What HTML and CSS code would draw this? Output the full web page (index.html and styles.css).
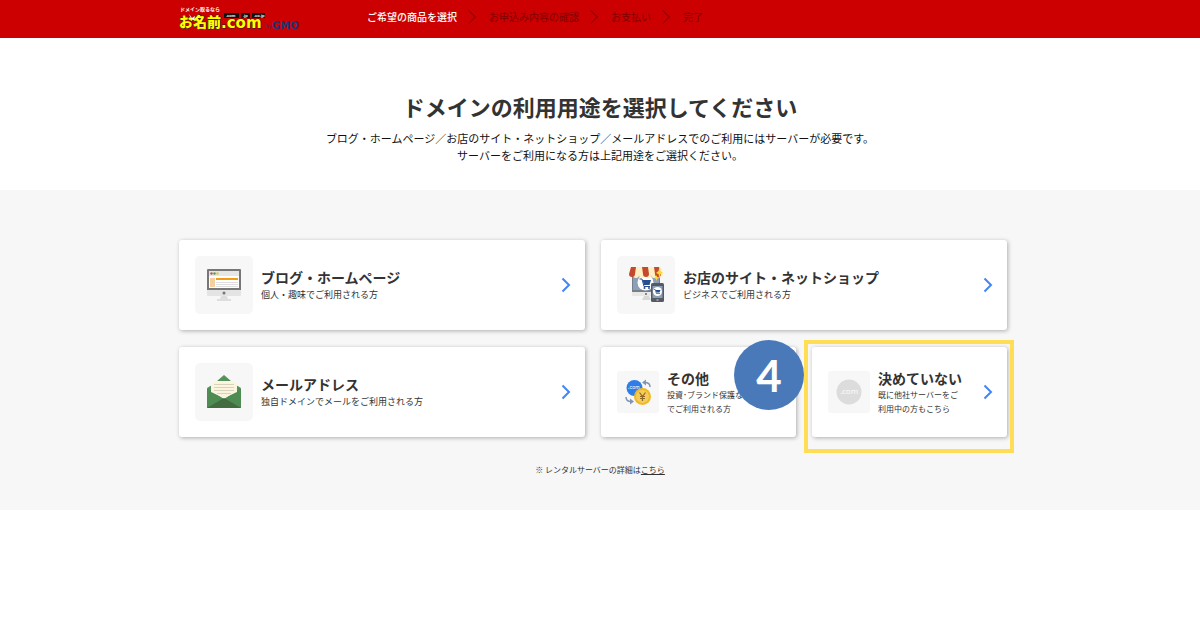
FILE: index.html
```html
<!DOCTYPE html>
<html lang="ja">
<head>
<meta charset="utf-8">
<title>ドメインの利用用途を選択</title>
<link rel="stylesheet" href="styles.css">
</head>
<body>
<header class="header">
  <div class="header-inner">
    <a class="logo" href="#">
      <svg width="122" height="30" viewBox="0 0 122 30" role="img" aria-label="ドメイン取るなら お名前.com by GMO">
        <text class="logo-tag" x="1" y="9">ドメイン取るなら</text>
        <text class="logo-name" x="0" y="25">お名前</text>
        <path d="M10 12l3 4 3-2-1 4-3-1z" fill="#fff"/>
        <text class="logo-com" x="42" y="26">.com</text>
        <path d="M45 11h15v5H45zM62 11h9v5h-9zM73 11h13v5H73z" fill="#111"/>
        <text class="logo-tld" x="47" y="15">.com</text>
        <text class="logo-tld" x="64" y="15">.jp</text>
        <text class="logo-tld" x="75" y="15">.co.jp</text>
        <text class="logo-by" x="87" y="26">by</text>
        <text class="logo-gmo" x="93" y="27">GMO</text>
      </svg>
    </a>
    <ol class="steps">
      <li class="step current">ご希望の商品を選択</li>
      <li class="step">お申込み内容の確認</li>
      <li class="step">お支払い</li>
      <li class="step">完了</li>
    </ol>
  </div>
</header>
<main>
  <section class="intro">
    <h1>ドメインの利用用途を選択してください</h1>
    <p>ブログ・ホームページ／お店のサイト・ネットショップ／メールアドレスでのご利用にはサーバーが必要です。<br>サーバーをご利用になる方は上記用途をご選択ください。</p>
  </section>
  <section class="choices">
    <div class="container">
      <div class="grid">
        <a class="card wide" href="#">
          <span class="icon">
            <svg width="36" height="34" viewBox="0 0 36 34">
              <rect x="1" y="1" width="34" height="27" rx="1" fill="#e4e4e4"/>
              <path d="M1 2a1 1 0 0 1 1-1h32a1 1 0 0 1 1 1v20H1z" fill="#777"/>
              <path d="M3 3h30v17H3z" fill="#fff"/><path d="M3 3h30v5H3z" fill="#e6e6e6"/>
              <circle cx="5.500" cy="5.500" r="1.200" fill="#d0474f"/><circle cx="8.500" cy="5.500" r="1.200" fill="#4d9a58"/><circle cx="11.500" cy="5.500" r="1.200" fill="#f1c31f"/>
              <path d="M4 10h5v9H4z" fill="#f6cfa0"/><path d="M10 10h22v2H10z" fill="#f79a14"/>
              <path d="M10 14h22v1H10zM10 16h22v1H10zM10 18h22v1H10z" fill="#dedede"/>
              <circle cx="18" cy="25" r="1.500" fill="#777"/>
              <path d="M15 28h6l1 3h3v2H11v-2h3z" fill="#dedede"/>
            </svg>
          </span>
          <span class="text"><span class="name">ブログ・ホームページ</span><span class="desc">個人・趣味でご利用される方</span></span>
          <svg class="arrow" width="10" height="16" viewBox="0 0 10 16"><path d="M1.500 1.500L8 8l-6.500 6.500"/></svg>
        </a>
        <a class="card wide" href="#">
          <span class="icon">
            <svg width="38" height="38" viewBox="0 0 38 38">
              <path d="M5 8h28v18H5z" fill="#777f8a"/><path d="M6 8h26v16H6z" fill="#8e9fb8"/>
              <path d="M5 26h28v4H5z" fill="#e8e8e8"/><path d="M17 30h5l2 4h-9z" fill="#d8d8d8"/><circle cx="19" cy="28" r="1" fill="#666"/>
              <circle cx="18.500" cy="16.500" r="8" fill="#fff"/>
              <path d="M12.500 13h2.500l2 7.500h6" fill="none" stroke="#284f8d"/><path d="M15.500 14h8.500l-1.500 5h-5.500z" fill="#284f8d"/>
              <circle cx="17.500" cy="22" r="1" fill="#284f8d"/><circle cx="22" cy="22" r="1" fill="#284f8d"/>
              <path d="M4 1h30l2 7a3 3 0 0 1-6 1 3 3 0 0 1-6 0 3 3 0 0 1-6 0 3 3 0 0 1-6 0 3 3 0 0 1-6 0 3 3 0 0 1-4-1z" fill="#fff0c4"/>
              <path d="M4 1h5L8 8a3 3 0 0 1-6 0zM15 1h6l1 7a3 3 0 0 1-6 0zM27 1h5l2 7a3 3 0 0 1-6 0z" fill="#c44a2d"/>
              <path d="M32.500 1l1 4 2.500 2-2.500 1-1 4-1-4-2.500-1 2.500-2zM29.500 9l.6 2 1.600 1-1.600 1-.6 2-.6-2-1.600-1 1.600-1z" fill="#ffd92e"/>
              <rect x="24" y="17" width="13" height="19" rx="1.500" fill="#555b64"/><path d="M25.500 20h10v12h-10z" fill="#8e9fb8"/>
              <circle cx="30.500" cy="25.500" r="4.500" fill="#fff"/><path d="M27 23.500h1.200l1.200 4h3.600" fill="none" stroke="#284f8d" stroke-width=".7"/><path d="M28.500 24h5l-1 2.500h-3z" fill="#284f8d"/>
              <path d="M29.500 33h2v2h-2z" fill="#999"/>
            </svg>
          </span>
          <span class="text"><span class="name">お店のサイト・ネットショップ</span><span class="desc">ビジネスでご利用される方</span></span>
          <svg class="arrow" width="10" height="16" viewBox="0 0 10 16"><path d="M1.500 1.500L8 8l-6.500 6.500"/></svg>
        </a>
        <a class="card wide" href="#">
          <span class="icon">
            <svg width="36" height="36" viewBox="0 0 36 36">
              <path d="M18 1l7 6H11zM1 14l5-3v10zM35 14l-5-3v10z" fill="#55935a"/>
              <path d="M1 14l17 11 17-11v20H1z" fill="#4e8c53"/>
              <path d="M7 8h22l2 2v8L18 24 5 18v-8z" fill="#fbf5df"/>
              <path d="M8 10h20v1H8zM8 13h20v1H8zM8 16h20v1H8zM11 19h14v1H11z" fill="#d9d3bb"/>
              <path d="M1 34l17-10 17 10z" fill="#426b3f"/>
            </svg>
          </span>
          <span class="text"><span class="name">メールアドレス</span><span class="desc">独自ドメインでメールをご利用される方</span></span>
          <svg class="arrow" width="10" height="16" viewBox="0 0 10 16"><path d="M1.500 1.500L8 8l-6.500 6.500"/></svg>
        </a>
        <a class="card narrow" href="#">
          <span class="icon">
            <svg width="28" height="28" viewBox="0 0 28 28">
              <circle cx="10.500" cy="10" r="8" fill="#2f7de6"/>
              <text class="icon-com" x="4" y="11">.com</text>
              <path d="M26 9c0-3-2-4.500-5-4.500M2 19c0 3 2 4.500 5 4.500" fill="none" stroke="#8495b3" stroke-width="1.500"/>
              <path d="M18 4.500l4-3v6zM10 23.500l-4-3v6z" fill="#8495b3"/>
              <circle cx="18.500" cy="18.500" r="8.500" fill="#f1b91f"/><circle cx="18.500" cy="18.500" r="6.500" fill="#f5cb5c"/>
              <path d="M15.500 14.500l3 4 3-4M18.500 18v5M16 18.500h5M16 20.500h5" fill="none" stroke="#8c6726" stroke-width="1.200"/>
            </svg>
          </span>
          <span class="text"><span class="name">その他</span><span class="desc">投資･ブランド保護など<br>でご利用される方</span></span>
          <svg class="arrow" width="10" height="16" viewBox="0 0 10 16"><path d="M1.500 1.500L8 8l-6.500 6.500"/></svg>
          <span class="badge">4</span>
        </a>
        <a class="card narrow highlighted" href="#">
          <span class="icon">
            <svg width="26" height="26" viewBox="0 0 26 26"><circle cx="13" cy="13" r="12.500" fill="#dcdcdc"/><text class="gray-com" x="13" y="15" text-anchor="middle">.com</text></svg>
          </span>
          <span class="text"><span class="name">決めていない</span><span class="desc">既に他社サーバーをご<br>利用中の方もこちら</span></span>
          <svg class="arrow" width="10" height="16" viewBox="0 0 10 16"><path d="M1.500 1.500L8 8l-6.500 6.500"/></svg>
        </a>
      </div>
      <p class="note">※ レンタルサーバーの詳細は<a href="#">こちら</a></p>
    </div>
  </section>
</main>
</body>
</html>
```
FILE: styles.css
```css
* { box-sizing: border-box; }
body {
  margin: 0;
  background: #fff;
  color: #333;
  font-family: "Noto Sans CJK JP", sans-serif;
}
a { color: inherit; }

.header { background: #c00; padding: 2px 0 6px; }
.header-inner {
  display: flex;
  align-items: center;
  gap: 66px;
  max-width: 842px;
  margin: 0 auto;
}
.logo, .logo svg { display: block; }
.logo-tag { font-size: 5px; font-weight: 700; fill: #fff; }
.logo-name { font-size: 14px; font-weight: 900; fill: #ff0; stroke: #222; stroke-width: 1px; paint-order: stroke; }
.logo-com { font-family: "DejaVu Sans", sans-serif; font-size: 15px; font-weight: 700; fill: #ff0; stroke: #222; stroke-width: 1px; paint-order: stroke; }
.logo-tld { font-family: "Liberation Sans", sans-serif; font-size: 4px; font-weight: 700; fill: #fff; }
.logo-by { font-family: "Liberation Sans", sans-serif; font-size: 5px; fill: #223377; }
.logo-gmo { font-family: "DejaVu Sans", sans-serif; font-size: 10px; font-weight: 700; fill: #223377; }
.steps {
  display: flex;
  margin: 0;
  padding: 0;
  list-style: none;
  font-size: 10px;
  line-height: 16px;
  color: #800000;
}
.step { display: flex; align-items: center; }
.step.current { color: #fff; font-weight: 500; }
.step + .step::before {
  content: "";
  width: 9px;
  height: 9px;
  margin: 0 15px 0 7px;
  border: solid #8f0000;
  border-width: 1px 1px 0 0;
  transform: rotate(45deg);
}

.intro { padding: 51px 16px 26px; text-align: center; }
.intro h1 { margin: 0 0 7px; font-size: 22px; line-height: 34px; font-weight: 700; }
.intro p { margin: 0; font-size: 11px; line-height: 17px; color: #111; }

.choices { background: #f7f7f7; padding: 50px 0 33px; }
.container { max-width: 842px; margin: 0 auto; }
.grid {
  display: grid;
  grid-template-columns: repeat(4, 1fr);
  gap: 17px 16px;
  margin-right: 14px;
}
.card {
  position: relative;
  display: flex;
  align-items: center;
  gap: 8px;
  min-height: 90px;
  padding: 16px 14px 16px 16px;
  border-radius: 3px;
  background: #fff;
  box-shadow: 1px 1px 4px rgba(0, 0, 0, 0.3);
  text-decoration: none;
}
.wide { grid-column: span 2; }
.icon {
  display: flex;
  flex: none;
  align-items: center;
  justify-content: center;
  width: 58px;
  height: 58px;
  border-radius: 5px;
  background: #f7f7f7;
}
.narrow .icon { width: 42px; height: 42px; border-radius: 3px; }
.icon-com { font-family: Inter, sans-serif; font-size: 5px; fill: #fff; }
.gray-com { font-family: "Open Sans", sans-serif; font-size: 8px; fill: #fff; }
.text { display: block; flex: 1; white-space: nowrap; min-width: 0; }
.name { display: block; font-size: 14px; line-height: 20px; font-weight: 700; }
.desc { display: block; font-size: 9px; line-height: 16px; }
.narrow .desc { font-size: 8px; line-height: 14px; }
.arrow { flex: none; fill: none; stroke: #4285f4; stroke-width: 2px; }
.badge {
  position: absolute;
  top: -7px;
  right: -8px;
  width: 70px;
  height: 70px;
  border-radius: 50%;
  background: #4a79ba;
  color: #fff;
  font: 700 44px/70px Lato, sans-serif;
  text-align: center;
}
.highlighted::after {
  content: "";
  position: absolute;
  inset: -7px -7px -16px -8px;
  border: 4px solid #ffdd55;
}
.note { margin: 26px 0 0; font-size: 8px; line-height: 14px; text-align: center; }
```
